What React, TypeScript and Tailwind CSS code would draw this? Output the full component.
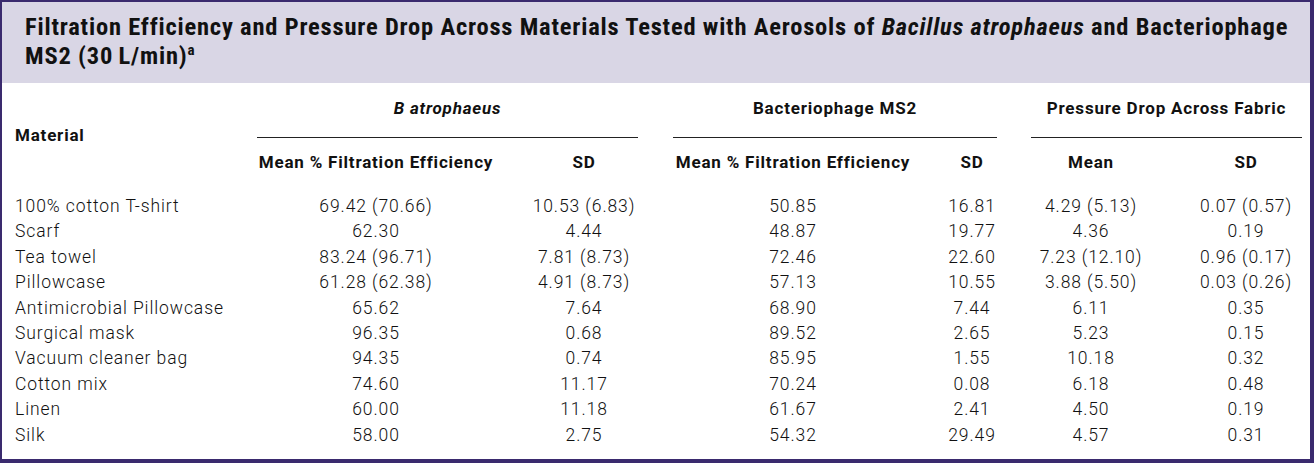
const cols = "grid grid-cols-[255px_238px_178px_240px_118px_120px_159px]";

const rows: string[][] = [
  ["100% cotton T-shirt", "69.42 (70.66)", "10.53 (6.83)", "50.85", "16.81", "4.29 (5.13)", "0.07 (0.57)"],
  ["Scarf", "62.30", "4.44", "48.87", "19.77", "4.36", "0.19"],
  ["Tea towel", "83.24 (96.71)", "7.81 (8.73)", "72.46", "22.60", "7.23 (12.10)", "0.96 (0.17)"],
  ["Pillowcase", "61.28 (62.38)", "4.91 (8.73)", "57.13", "10.55", "3.88 (5.50)", "0.03 (0.26)"],
  ["Antimicrobial Pillowcase", "65.62", "7.64", "68.90", "7.44", "6.11", "0.35"],
  ["Surgical mask", "96.35", "0.68", "89.52", "2.65", "5.23", "0.15"],
  ["Vacuum cleaner bag", "94.35", "0.74", "85.95", "1.55", "10.18", "0.32"],
  ["Cotton mix", "74.60", "11.17", "70.24", "0.08", "6.18", "0.48"],
  ["Linen", "60.00", "11.18", "61.67", "2.41", "4.50", "0.19"],
  ["Silk", "58.00", "2.75", "54.32", "29.49", "4.57", "0.31"],
];

const head = "font-[Roboto,sans-serif] font-bold font-stretch-[90%] text-[17px] leading-[20px] tracking-[0.8px] whitespace-nowrap text-[#111]";

export default function App() {
  return (
    <div className="w-[1314px] h-[469px] bg-white">
      <div className="h-[463px] border-t-2 border-l-2 border-r-4 border-b-4 border-[#3a2a6e] flex flex-col">
        {/* caption */}
        <div className="shrink-0 h-[81px] bg-[#d9d6e5] pl-[23px] pt-[10px] font-[Roboto,sans-serif] font-bold font-stretch-[82%] text-[24.5px] leading-[29px] tracking-[0.8px] text-[#111]">
          <div className="whitespace-nowrap">
            Filtration Efficiency and Pressure Drop Across Materials Tested with Aerosols of <i>Bacillus atrophaeus</i> and Bacteriophage
          </div>
          <div className="whitespace-nowrap">
            MS2 (30{"\u2009"}L/min)<sup className="text-[15px] leading-none align-top relative top-[2px]">a</sup>
          </div>
        </div>

        {/* column headers */}
        <div className={`${cols} shrink-0 pt-[15px]`}>
          <div className={`${head} row-span-2 self-center pl-[13px]`}>Material</div>
          <div className={`${head} col-span-2 mr-[35px] border-b border-[#222] pb-[19px] text-center italic`}>B atrophaeus</div>
          <div className={`${head} col-span-2 mr-[34px] border-b border-[#222] pb-[19px] text-center`}>Bacteriophage MS2</div>
          <div className={`${head} col-span-2 mr-[8px] border-b border-[#222] pb-[19px] text-center`}>Pressure Drop Across Fabric</div>
          <div className={`${head} pt-[14px] text-center`}>Mean % Filtration Efficiency</div>
          <div className={`${head} pt-[14px] text-center`}>SD</div>
          <div className={`${head} pt-[14px] text-center`}>Mean % Filtration Efficiency</div>
          <div className={`${head} pt-[14px] text-center`}>SD</div>
          <div className={`${head} pt-[14px] text-center`}>Mean</div>
          <div className={`${head} pt-[14px] pl-[31px] text-center`}>SD</div>
        </div>

        {/* body */}
        <div className="shrink-0 pt-[22px] font-[Roboto,sans-serif] font-light text-[17.5px] leading-[25.4px] tracking-[0.9px] text-[#111]">
          {rows.map((r) => (
            <div key={r[0]} className={cols}>
              <div className="pl-[13px] whitespace-nowrap">{r[0]}</div>
              <div className="text-center">{r[1]}</div>
              <div className="text-center">{r[2]}</div>
              <div className="text-center">{r[3]}</div>
              <div className="text-center">{r[4]}</div>
              <div className="text-center">{r[5]}</div>
              <div className="pl-[31px] text-center">{r[6]}</div>
            </div>
          ))}
        </div>
      </div>
    </div>
  );
}
